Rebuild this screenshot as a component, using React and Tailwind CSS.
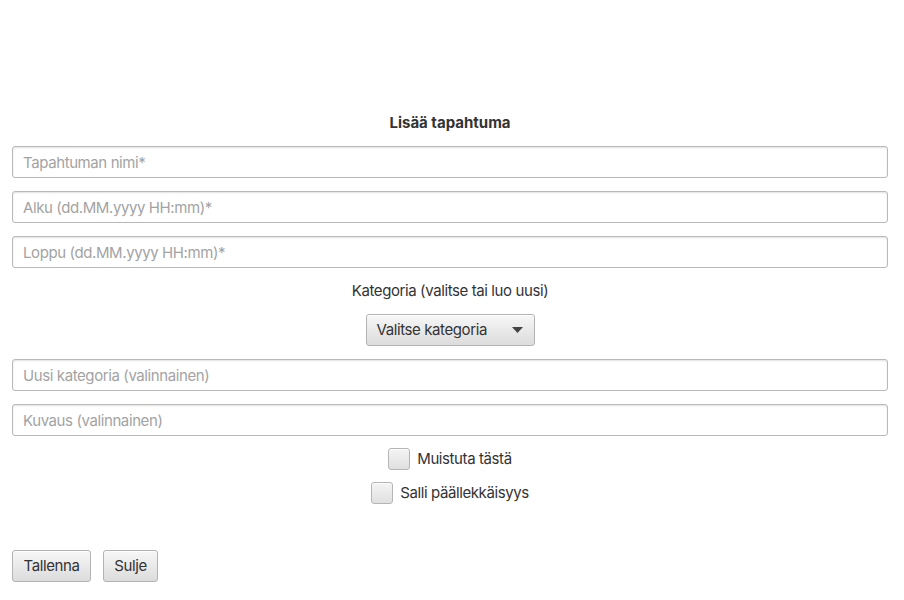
import { useState } from 'react'

const font = { fontFamily: 'Inter, "Noto Sans", sans-serif' }

function Field({ placeholder }) {
  return (
    <input
      placeholder={placeholder}
      className="w-full h-[32px] px-[10px] rounded-[3px] border border-[#b9b9b9] bg-white text-[15px] tracking-[-0.4px] text-[#333] placeholder:text-[#a3a3a3] shadow-[inset_0_1px_2px_rgba(0,0,0,0.12)] outline-none"
    />
  )
}

function Check({ label, checked, onChange }) {
  return (
    <label className="flex items-center gap-[7px] h-[22px] cursor-default">
      <span
        onClick={onChange}
        className="w-[22px] h-[22px] rounded-[3px] border border-[#b5b5b5] bg-gradient-to-b from-[#f4f4f4] to-[#e0e0e0] shadow-[inset_0_1px_0_rgba(255,255,255,0.8)] flex items-center justify-center text-[13px] text-[#333]"
      >
        {checked ? '✓' : ''}
      </span>
      <span className="text-[15px] tracking-[-0.4px] text-[#333]">{label}</span>
    </label>
  )
}

export default function App() {
  const [remind, setRemind] = useState(false)
  const [overlap, setOverlap] = useState(false)

  const btn =
    'h-[32px] rounded-[3px] border border-[#b3b3b3] bg-gradient-to-b from-[#f7f7f7] to-[#dcdcdc] text-[15px] tracking-[-0.4px] text-[#333] shadow-[inset_0_1px_0_rgba(255,255,255,0.9)]'

  return (
    <div className="w-[904px] h-[600px] bg-white" style={font}>
      <div className="flex flex-col items-center gap-[13px] pl-[12px] pr-[16px] pt-[113px]">
        <h1 className="h-[20px] leading-[20px] text-[15px] font-bold text-[#333]">Lisää tapahtuma</h1>
        <Field placeholder="Tapahtuman nimi*" />
        <Field placeholder="Alku (dd.MM.yyyy HH:mm)*" />
        <Field placeholder="Loppu (dd.MM.yyyy HH:mm)*" />
        <div className="h-[20px] leading-[20px] text-[15px] tracking-[-0.4px] text-[#333]">Kategoria (valitse tai luo uusi)</div>
        <button className={`${btn} w-[169px] flex items-center justify-between pl-[10px] pr-[11px]`}>
          <span>Valitse kategoria</span>
          <svg width="11" height="6" viewBox="0 0 11 6">
            <path d="M0 0 L11 0 L5.5 6 Z" fill="#444" />
          </svg>
        </button>
        <Field placeholder="Uusi kategoria (valinnainen)" />
        <Field placeholder="Kuvaus (valinnainen)" />
        <div className="flex flex-col items-center gap-[12px] -mt-[1px]">
          <Check label="Muistuta tästä" checked={remind} onChange={() => setRemind(!remind)} />
          <Check label="Salli päällekkäisyys" checked={overlap} onChange={() => setOverlap(!overlap)} />
        </div>
        <div className="self-start flex gap-[12px] mt-[33px]">
          <button className={`${btn} w-[79px]`}>Tallenna</button>
          <button className={`${btn} w-[55px]`}>Sulje</button>
        </div>
      </div>
    </div>
  )
}
